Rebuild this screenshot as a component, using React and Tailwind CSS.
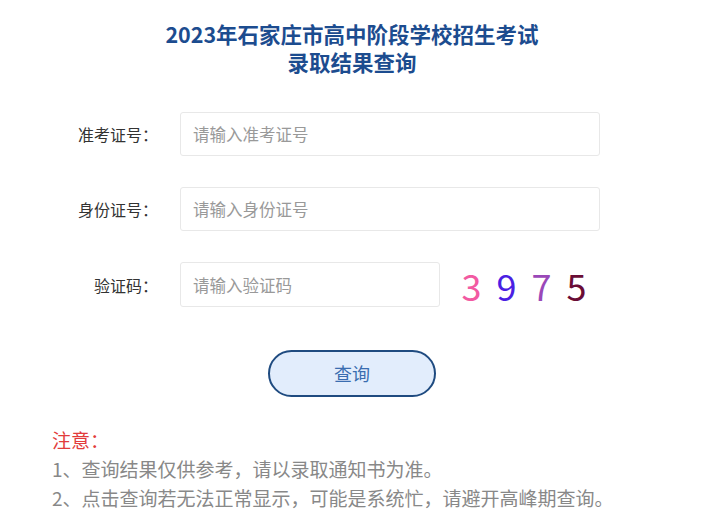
import React from 'react'

const fields = [
  { label: '准考证号：', placeholder: '请输入准考证号' },
  { label: '身份证号：', placeholder: '请输入身份证号' },
]

const code = [
  { d: '3', color: 'text-[#f25aa2]' },
  { d: '9', color: 'text-[#4b1fe3]' },
  { d: '7', color: 'text-[#9a48b8]' },
  { d: '5', color: 'text-[#6a0d36]' },
]

const App = () => {
  return (
    <div className="w-[704px] bg-white pt-[20px] font-['Noto_Sans_CJK_SC',sans-serif]">
      <div className="text-center text-[21.5px] font-bold leading-[28px] text-[#1c4c8f]">
        <p>2023年石家庄市高中阶段学校招生考试</p>
        <p>录取结果查询</p>
      </div>

      <div className="mt-[36px] flex flex-col gap-[31px]">
        {fields.map((f, i) => (
          <div key={i} className="flex items-center">
            <label className="w-[158px] pl-[60px] text-right text-[16px] text-[#333]">{f.label}</label>
            <input
              className="ml-[22px] h-[44px] w-[420px] rounded-[3px] border border-[#e8e8e8] px-[12px] text-[16.5px] outline-none placeholder:text-[#999]"
              placeholder={f.placeholder}
            />
          </div>
        ))}
        <div className="flex items-center">
          <label className="w-[158px] pl-[60px] text-right text-[16px] text-[#333]">验证码：</label>
          <input
            className="ml-[22px] h-[45px] w-[260px] rounded-[3px] border border-[#e8e8e8] px-[12px] text-[16.5px] outline-none placeholder:text-[#999]"
            placeholder="请输入验证码"
          />
          <div className="ml-[14px] flex text-[36px] leading-none">
            {code.map((c, i) => (
              <span key={i} className={`w-[35px] text-center ${c.color}`}>{c.d}</span>
            ))}
          </div>
        </div>
      </div>

      <div className="mt-[43px] flex justify-center">
        <button className="h-[47px] w-[168px] rounded-full border-2 border-[#1f4b80] bg-[#e2edfc] text-[18px] text-[#3a6db0]">
          查询
        </button>
      </div>

      <div className="mt-[28px] pb-[10px] pl-[52px] text-[19px] leading-[29px] text-[#888]">
        <p className="text-[#e23b3b]">注意：</p>
        <p>1、查询结果仅供参考，请以录取通知书为准。</p>
        <p>2、点击查询若无法正常显示，可能是系统忙，请避开高峰期查询。</p>
      </div>
    </div>
  )
}

export default App
